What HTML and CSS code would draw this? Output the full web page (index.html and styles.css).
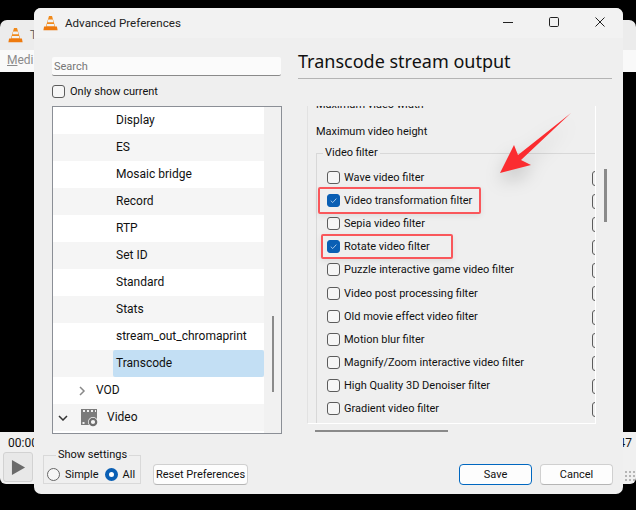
FILE: index.html
```html
<!DOCTYPE html>
<html lang="en">
<head>
<meta charset="utf-8">
<title>Advanced Preferences</title>
<link rel="stylesheet" href="styles.css">
</head>
<body>
<div class="desktop">
  <div class="back-window">
    <div class="back-title">
      <svg class="cone" viewBox="0 0 16 16"><use href="#vlc"/></svg>
      <span>T</span>
    </div>
    <div class="back-menu"><span><u>M</u>edi</span></div>
    <div class="back-video"></div>
    <div class="back-bottom">
      <div class="back-time"><span>00:00</span><span>47</span></div>
      <div class="back-controls">
        <div class="play"><svg viewBox="0 0 16 18" width="15" height="17"><path d="M1 1 L15 9 L1 17 Z" fill="#6a6a6a"/></svg></div>
        <div class="grip"></div>
      </div>
    </div>
  </div>

  <section class="dialog">
    <header class="titlebar">
      <svg class="cone" viewBox="0 0 16 16">
        <defs><g id="vlc">
          <path d="M6.4 0.5 H9.6 L13 12 H3 Z" fill="#f08a1c"/>
          <path d="M5.6 4.2 H10.4 L11.1 7.2 H4.9 Z" fill="#f2f2f2"/>
          <path d="M4.4 9 H11.6 L12.2 11.4 H3.8 Z" fill="#f2f2f2"/>
          <path d="M1.2 11.6 H14.8 L15.6 15.6 H0.4 Z" fill="#ee7a0e"/>
        </g></defs>
        <use href="#vlc"/>
      </svg>
      <span class="title-text">Advanced Preferences</span>
      <div class="win-buttons">
        <svg width="12" height="12" viewBox="0 0 12 12"><path d="M1 6.5 H11" stroke="#222" fill="none"/></svg>
        <svg width="12" height="12" viewBox="0 0 12 12"><rect x="1.5" y="1.5" width="9" height="9" rx="1.2" stroke="#222" fill="none"/></svg>
        <svg width="12" height="12" viewBox="0 0 12 12"><path d="M1.5 1.5 L10.5 10.5 M10.5 1.5 L1.5 10.5" stroke="#222" fill="none"/></svg>
      </div>
    </header>

    <div class="content">
      <aside class="left">
        <div class="search">Search</div>
        <label class="only"><span class="box"></span>Only show current</label>
        <div class="tree">
          <div class="tree-scroll">
            <div class="row leaf">Display</div>
            <div class="row leaf alt">ES</div>
            <div class="row leaf">Mosaic bridge</div>
            <div class="row leaf alt">Record</div>
            <div class="row leaf">RTP</div>
            <div class="row leaf alt">Set ID</div>
            <div class="row leaf">Standard</div>
            <div class="row leaf alt">Stats</div>
            <div class="row leaf">stream_out_chromaprint</div>
            <div class="row leaf alt"><span class="selected">Transcode</span></div>
            <div class="row vod">
              <svg width="8" height="10" viewBox="0 0 8 10"><path d="M2 1 L6 5 L2 9" stroke="#888" stroke-width="1.5" fill="none"/></svg>
              <span class="row-label">VOD</span>
            </div>
            <div class="row video alt">
              <svg width="10" height="6" viewBox="0 0 10 6"><path d="M1 1 L5 5 L9 1" stroke="#333" stroke-width="1.5" fill="none"/></svg>
              <svg class="video-icon" width="18" height="19" viewBox="0 0 18 19">
                <path d="M1 1 H17 V11 A5 5 0 0 0 9 17 H1 Z" fill="#7b7b7b"/>
                <path d="M3 2 H5 V4 H3 Z M7 2 H9 V4 H7 Z M11 2 H13 V4 H11 Z M15 2 H16 V4 H15 Z M2.5 14 H4.5 V16 H2.5 Z" fill="#efefef"/>
                <circle cx="13" cy="14" r="3.2" fill="none" stroke="#6e6e6e" stroke-width="2.2"/>
              </svg>
              <span class="row-label">Video</span>
            </div>
          </div>
          <div class="tree-track"><div class="tree-thumb"></div></div>
        </div>
      </aside>

      <main class="right">
        <h1 class="heading">Transcode stream output</h1>
        <div class="panel-wrap">
          <div class="panel">
            <div class="panel-inner">
              <div class="field cut">Maximum video width</div>
              <div class="field">Maximum video height</div>
              <fieldset class="group">
                <legend>Video filter</legend>
                <div class="check"><span class="box"></span>Wave video filter</div>
                <div class="check"><span class="box on"><svg viewBox="0 0 14 14"><path d="M3.5 7.2 L6 9.6 L10.6 4.6" stroke="#cfe2f5" fill="none"/></svg></span>Video transformation filter</div>
                <div class="check"><span class="box"></span>Sepia video filter</div>
                <div class="check"><span class="box on"><svg viewBox="0 0 14 14"><path d="M3.5 7.2 L6 9.6 L10.6 4.6" stroke="#cfe2f5" fill="none"/></svg></span>Rotate video filter</div>
                <div class="check"><span class="box"></span>Puzzle interactive game video filter</div>
                <div class="check"><span class="box"></span>Video post processing filter</div>
                <div class="check"><span class="box"></span>Old movie effect video filter</div>
                <div class="check"><span class="box"></span>Motion blur filter</div>
                <div class="check"><span class="box"></span>Magnify/Zoom interactive video filter</div>
                <div class="check"><span class="box"></span>High Quality 3D Denoiser filter</div>
                <div class="check"><span class="box"></span>Gradient video filter</div>
              </fieldset>
            </div>
          </div>
          <div class="v-track"><div class="v-thumb"></div></div>
        </div>
        <div class="h-track"><div class="h-thumb"></div></div>
      </main>
    </div>

    <footer class="footer">
      <fieldset class="settings">
        <legend>Show settings</legend>
        <span class="radio"></span><span class="radio-label">Simple</span>
        <span class="radio on"></span><span class="radio-label">All</span>
      </fieldset>
      <button class="btn reset">Reset Preferences</button>
      <div class="footer-right">
        <button class="btn primary">Save</button>
        <button class="btn">Cancel</button>
      </div>
    </footer>
  </section>

  <div class="mark mark-a"></div>
  <div class="mark mark-b"></div>
  <svg class="arrow" width="80" height="70" viewBox="0 0 80 70">
    <path d="M75 3 L22 45 L18 35 L4 63 L35 55 L25 50 Z" fill="#fb2c30"/>
  </svg>
</div>
</body>
</html>
```

FILE: styles.css
```css
* { box-sizing: border-box; }
html, body { margin: 0; height: 100%; }
body { background: #000; font-family: Roboto, "Noto Sans", sans-serif; font-size: 11px; color: #111; overflow: hidden; }
.desktop { position: relative; width: 636px; height: 510px; overflow: hidden; background: #000; }

.back-window { position: absolute; left: 0; top: 20px; width: 636px; height: 464px; border-radius: 7px 7px 6px 6px; display: flex; flex-direction: column; overflow: hidden; }
.back-title { height: 30px; background: #ececec; display: flex; align-items: center; gap: 7px; padding-left: 8px; color: #666; flex: none; font-size: 12px; }
.back-title .cone { width: 15px; height: 16px; }
.back-menu { height: 22px; background: #f9f9f9; padding-left: 7px; color: #8a8a8a; line-height: 21px; flex: none; font-size: 12px; }
.back-video { flex: 1; background: #000; }
.back-bottom { height: 52px; background: #f0f0f0; flex: none; }
.back-time { display: flex; justify-content: space-between; padding: 4px 0 0 8px; height: 20px; line-height: 14px; font-size: 12px; }
.back-time span:last-child { margin-right: 4px; }
.back-controls { padding-left: 3px; display: flex; justify-content: space-between; }
.play { width: 30px; height: 30px; background: #e8e8e8; border: 1px solid #d2d2d2; border-radius: 3px; display: flex; align-items: center; justify-content: center; }
.grip { width: 12px; height: 12px; margin-top: 18px; background-image: radial-gradient(#b5b5b5 1px, transparent 1px); background-size: 4px 4px; }

.dialog { position: absolute; left: 34px; top: 8px; width: 589px; height: 486px; background: #efefef; border-radius: 7px; display: flex; flex-direction: column; }
.titlebar { height: 30px; background: #f2f2f2; border-radius: 7px 7px 0 0; display: flex; align-items: center; padding-left: 9px; flex: none; }
.titlebar .cone { width: 15px; height: 16px; margin-right: 7px; }
.title-text { font-size: 11.6px; color: #222; }
.win-buttons { margin-left: auto; display: flex; gap: 34px; padding: 0 17px 2px 0; }

.content { flex: 1; display: flex; min-height: 0; }
.left { width: 233px; padding: 19px 0 0 18px; flex: none; }
.search { width: 229px; height: 19px; background: #fbfbfb; border-bottom: 1px solid #8a8a8a; border-radius: 2px; padding: 1px 0 0 2px; color: #777; font-size: 11px; line-height: 18px; }
.only { display: flex; align-items: center; gap: 5px; margin-top: 7px; height: 16px; }
.box { width: 13px; height: 13px; border: 1px solid #5c5c5c; border-radius: 3px; background: #f6f6f6; flex: none; display: block; }
.tree { margin-top: 7px; width: 230px; height: 328px; border: 1px solid #8b8f96; background: #fff; display: flex; overflow: hidden; font-size: 12px; }
.tree-scroll { width: 211px; flex: none; }
.row { height: 27px; line-height: 26px; white-space: nowrap; color: #111; }
.row.alt { background: #f5f5f5; }
.leaf { padding-left: 63px; }
.selected { display: block; margin-left: -3px; padding-left: 3px; height: 27px; background: #c3dff4; border-radius: 2px; }
.vod { display: flex; align-items: center; padding-left: 25px; gap: 10px; }
.video { display: flex; align-items: center; padding-left: 5px; }
.video-icon { margin-left: 12px; margin-right: 9px; }
.row-label { margin-top: -2px; }
.tree-track { flex: 1; background: #f1f1f1; position: relative; }
.tree-thumb { position: absolute; left: 8px; top: 209px; width: 2px; height: 76px; background: #8a8a8a; }

.right { flex: 1; padding-left: 31px; min-width: 0; }
.heading { margin: 10px 0 0; width: 314px; height: 31px; font-family: "Noto Sans", sans-serif; font-size: 18px; font-weight: 400; line-height: 26px; color: #111; border-bottom: 1px solid #b4b4b4; white-space: nowrap; }
.panel-wrap { display: flex; margin-top: 27px; margin-left: 9px; }
.panel { width: 289px; height: 318px; flex: none; background: #efefef; border-left: 1px solid #e2e2e2; border-right: 1px solid #fff; border-bottom: 1px solid #fff; overflow: hidden; }
.panel-inner { padding-left: 8px; margin-top: -13px; }
.field { height: 23px; line-height: 24px; white-space: nowrap; }
.field.cut { height: 21px; }
.field + .field { margin-top: 6px; }
.group { margin: 3px 0 0 0; padding: 0 0 24px 10px; width: 300px; border: 1px solid #d8d8d8; border-right: 0; }
.group legend { padding: 0 2px; margin-left: -4px; line-height: 14px; }
.check { display: flex; align-items: center; gap: 4px; height: 23.1px; white-space: nowrap; position: relative; }
.group legend + .check { margin-top: 6px; }
.check::after { content: ""; position: absolute; left: 265px; top: 5px; width: 13px; height: 13px; border: 1px solid #5c5c5c; border-radius: 3px; }
.box.on { background: #0a5fb4; border-color: #0a5fb4; }
.box svg { display: block; width: 11px; height: 11px; }
.v-track { width: 20px; padding: 63px 0 0 8px; }
.v-thumb { width: 3px; height: 53px; background: #8a8a8a; }
.h-track { margin-top: 6px; height: 3px; padding-left: 17px; }
.h-thumb { width: 133px; height: 2px; background: #8a8a8a; }

.footer { height: 52px; display: flex; align-items: flex-start; padding: 6px 0 0 9px; flex: none; }
.settings { margin: 0; padding: 4px 0 0 3px; width: 98px; height: 36px; border: 1px solid #d9d9d9; display: flex; align-items: center; }
.settings legend { padding: 0 2px; margin-left: 9px; line-height: 14px; }
.radio { width: 13px; height: 13px; border: 1px solid #666; border-radius: 50%; flex: none; background: #f6f6f6; }
.radio.on { border: 4px solid #0a5fb4; background: #fff; margin-left: 6px; }
.radio-label { margin-left: 5px; }
.btn { font: inherit; font-size: 11px; color: #111; background: #fdfdfd; border: 1px solid #d0d0d0; border-bottom-color: #b5b5b5; border-radius: 4px; height: 21px; padding: 0; margin: 0; white-space: nowrap; }
.reset { width: 95px; margin: 16px 0 0 12px; }
.footer-right { margin-left: auto; margin-right: 10px; margin-top: 16px; display: flex; gap: 8px; }
.footer-right .btn { width: 73px; }
.primary { border: 1px solid #0067c0; }

.mark { position: absolute; border: 2px solid #f9575b; border-radius: 2px; box-shadow: 0 2px 6px rgba(0,0,0,.08); }
.mark-a { left: 318px; top: 187px; width: 163px; height: 27px; }
.mark-b { left: 321px; top: 234px; width: 132px; height: 25px; }
.arrow { position: absolute; left: 496px; top: 110px; filter: drop-shadow(0 8px 9px rgba(0,0,0,.2)); }
```
